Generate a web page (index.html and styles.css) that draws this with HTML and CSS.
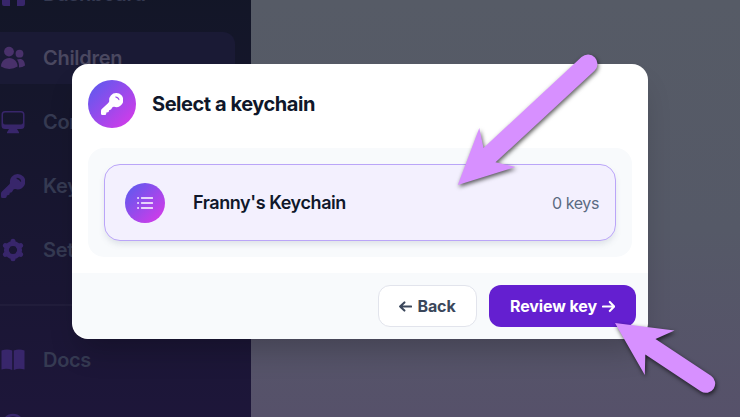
FILE: index.html
```html
<!DOCTYPE html>
<html lang="en">
<head>
<meta charset="utf-8">
<title>Select a keychain</title>
<link rel="stylesheet" href="styles.css">
</head>
<body>
<svg width="0" height="0" class="defs">
  <symbol id="key" viewBox="0 0 24 24"><path fill-rule="evenodd" d="M16.500 0A7.600 7.600 0 0 0 9 8.800C8.900 9.800 8.500 10.200 7.900 10.800L.9 17.500Q0 18.400 0 19.500V22.500Q0 24 1.500 24H4.300Q5.500 24 5.700 22.600L5.900 21.400 7.500 21.100Q8.400 20.900 8.600 19.900L8.800 18.700 10.200 18.400Q11 18.200 11.300 17.500L12.300 15.700Q13 14.900 14.500 15.100A7.700 7.700 0 1 0 16.500 0ZM15.800 3.800Q19.600 4 20.200 7.400Q19.900 8.200 19.300 7.600Q18.400 5.700 15.900 5Q15.200 4.300 15.800 3.800Z"/></symbol>
</svg>
<div class="app">
  <nav class="sidebar">
    <a class="item"><svg viewBox="0 0 24 24"><path d="M12 0 24 10V22a2 2 0 0 1-2 2H16V15H9V24H3a2 2 0 0 1-2-2V10Z"/></svg><span>Dashboard</span></a>
    <a class="item active"><svg viewBox="0 0 24 24"><circle cx="8" cy="5.600" r="4.900"/><circle cx="18.500" cy="7.700" r="3.900"/><path d="M0 20.500C0 15.500 3.500 11.900 8.300 11.900S16.600 15.500 16.600 20.500Q13 22.900 8.300 22.900T0 20.500ZM18 21.500C18.300 18.500 17.600 15.800 16 13.600Q17.500 12.900 19 12.900C22 12.900 24 15.500 24 19.500Q21.500 21.500 18 21.500Z"/></svg><span>Children</span></a>
    <a class="item"><svg viewBox="0 0 24 24"><path fill-rule="evenodd" d="M4 1H20A3.500 3.500 0 0 1 23.500 4.500V15.500A3.500 3.500 0 0 1 20 19H16L18 22.300V23.300H6V22.300L8 19H4A3.500 3.500 0 0 1 .5 15.500V4.500A3.500 3.500 0 0 1 4 1ZM4 2.500A2 2 0 0 0 2 4.500V12.500A2 2 0 0 0 4 14.500H20A2 2 0 0 0 22 12.500V4.500A2 2 0 0 0 20 2.500Z"/></svg><span>Computers</span></a>
    <a class="item"><svg><use href="#key"/></svg><span>Keychains</span></a>
    <a class="item"><svg class="gear" viewBox="0 0 24 24"><circle cx="12" cy="12" r="6.600"/><path d="M12 5.500V3.200M12 18.500V20.800M17.600 8.800 19.600 7.600M6.400 15.200 4.400 16.400M17.600 15.200 19.600 16.400M6.400 8.800 4.400 7.600"/></svg><span>Settings</span></a>
    <div class="divider"></div>
    <a class="item"><svg viewBox="0 0 24 24"><path d="M.5 2.500Q6 .4 11.200 2.500V22Q6 19.800 .5 21.500ZM12.800 2.500Q18 .4 23.500 2.500V21.500Q18 19.800 12.800 22Z"/></svg><span>Docs</span></a>
    <a class="item"><svg viewBox="0 0 24 24"><circle class="ring" cx="12" cy="12" r="10"/><circle class="ring" cx="12" cy="12" r="4"/></svg><span>Support</span></a>
  </nav>
  <main class="content"></main>
</div>

<div class="overlay">
  <section class="modal">
    <header class="head">
      <span class="badge big"><svg><use href="#key"/></svg></span>
      <h1>Select a keychain</h1>
    </header>
    <div class="list">
      <div class="card">
        <span class="badge"><svg viewBox="0 0 16 12"><path d="M4.500 1H15.500M4.500 6H15.500M4.500 11H15.500M.7 1H1.500M.7 6H1.500M.7 11H1.500"/></svg></span>
        <h2>Franny's Keychain</h2>
        <span class="count">0 keys</span>
      </div>
    </div>
    <footer class="foot">
      <button class="btn"><svg viewBox="0 0 12 12"><path d="M5 2.200 1 6 5 9.800M1 6H11.200"/></svg>Back</button>
      <button class="btn primary">Review key<svg viewBox="0 0 12 12"><path d="M7.200 1.800 11.200 6 7.200 10.200M11.200 6H.9"/></svg></button>
    </footer>
  </section>
</div>

<svg class="arrows" viewBox="0 0 740 417">
  <path d="M457.800 185 479.300 128 483.500 148 581.500 57A9.400 9.400 0 0 1 594.500 70.800L495.500 162.300 515.500 167Z"/>
  <path d="M615 323 674.500 330.500 655.500 339 711 375.700A9.300 9.300 0 0 1 700.700 391.300L645.300 354.500 644.800 375Z"/>
</svg>
</body>
</html>
```
FILE: styles.css
```css
* { box-sizing: border-box; }
body {
  margin: 0;
  height: 417px;
  overflow: hidden;
  font-family: Inter, "Liberation Sans", sans-serif;
}
h1, h2 { margin: 0; }
.defs { position: absolute; }
.app { display: flex; height: 417px; overflow: hidden; }
.sidebar {
  width: 251px;
  flex: none;
  margin-top: -32px;
  height: 481px;
  padding-right: 16px;
  background: linear-gradient(#121626, #1e163b);
}
.item {
  display: flex;
  align-items: center;
  gap: 18px;
  height: 52px;
  margin-bottom: 12px;
  padding-left: 1px;
  border-radius: 0 12px 12px 0;
  color: #353a52;
  font-size: 20px;
  font-weight: 600;
  letter-spacing: -.3px;
}
.item:last-child { margin-top: 13px; }
.item svg { width: 24px; height: 24px; flex: none; fill: #38266b; }
.item.active { background: #1a1a35; color: #4a4860; }
.item.active svg { fill: #49316b; }
.item .gear { fill: none; stroke: #38266b; stroke-width: 5; stroke-linecap: round; }
.item .ring { fill: none; stroke: #38266b; stroke-width: 2.500; }
.divider { height: 2px; margin: 28px -16px 28px 0; background: #211d3b; }
.content { flex: 1; background: linear-gradient(#565b66 0, #555967 55%, #56516a); }

.overlay {
  position: absolute;
  inset: 0;
  padding: 64px 92px 0 72px;
}
.modal {
  height: 275px;
  border-radius: 16px;
  background: #fff;
  overflow: hidden;
  box-shadow: 0 18px 30px -8px rgba(0, 0, 0, .22);
}
.head { display: flex; align-items: center; gap: 16px; padding: 16px 16px 0; height: 64px; }
.head h1 { font-size: 20px; font-weight: 700; line-height: 28px; color: #0f172a; letter-spacing: -.45px; }
.badge {
  display: flex;
  align-items: center;
  justify-content: center;
  width: 40px;
  height: 40px;
  flex: none;
  border-radius: 50%;
  background: linear-gradient(135deg, #6358ee 10%, #d33be9 92%);
}
.badge.big { width: 48px; height: 48px; }
.big svg { width: 22px; height: 22px; fill: #fff; }
.card .badge svg { width: 16px; height: 12px; fill: none; stroke: #fff; stroke-width: 1.300; stroke-linecap: round; }
.list { margin: 20px 16px 16px; padding: 16px; height: 109px; border-radius: 16px; background: #f8fafc; }
.card {
  display: flex;
  align-items: center;
  height: 77px;
  padding: 0 16px 0 20px;
  border: 1px solid #baa5f8;
  border-radius: 16px;
  background: #f3f0fe;
  box-shadow: 0 4px 6px -1px rgba(100, 116, 139, .18);
}
.card h2 { margin-left: 28px; font-size: 18px; font-weight: 600; color: #0f172a; letter-spacing: -.42px; }
.count { margin-left: auto; font-size: 16px; color: #5b6b82; letter-spacing: -.4px; }
.foot {
  display: flex;
  justify-content: flex-end;
  gap: 12px;
  height: 66px;
  padding: 12px;
  border-radius: 0 0 20px 20px;
  background: #f8fafc;
}
.btn {
  display: flex;
  align-items: center;
  justify-content: center;
  gap: 5px;
  width: 99px;
  height: 42px;
  padding: 0;
  border: 1px solid #e2e4ec;
  border-radius: 12px;
  background: #fff;
  color: #3b475b;
  font: 700 16px Inter, "Liberation Sans", sans-serif;
  letter-spacing: -.1px;
}
.btn svg { width: 13px; height: 13px; fill: none; stroke: currentColor; stroke-width: 1.900; stroke-linecap: round; stroke-linejoin: round; }
.btn.primary { border: 0; width: 147px; background: #641fd0; color: #fff; }
.arrows {
  position: absolute;
  inset: 0;
  width: 740px;
  height: 417px;
  fill: #d790ff;
  filter: drop-shadow(1px 2px 2px rgba(0, 0, 0, .65));
}
```
